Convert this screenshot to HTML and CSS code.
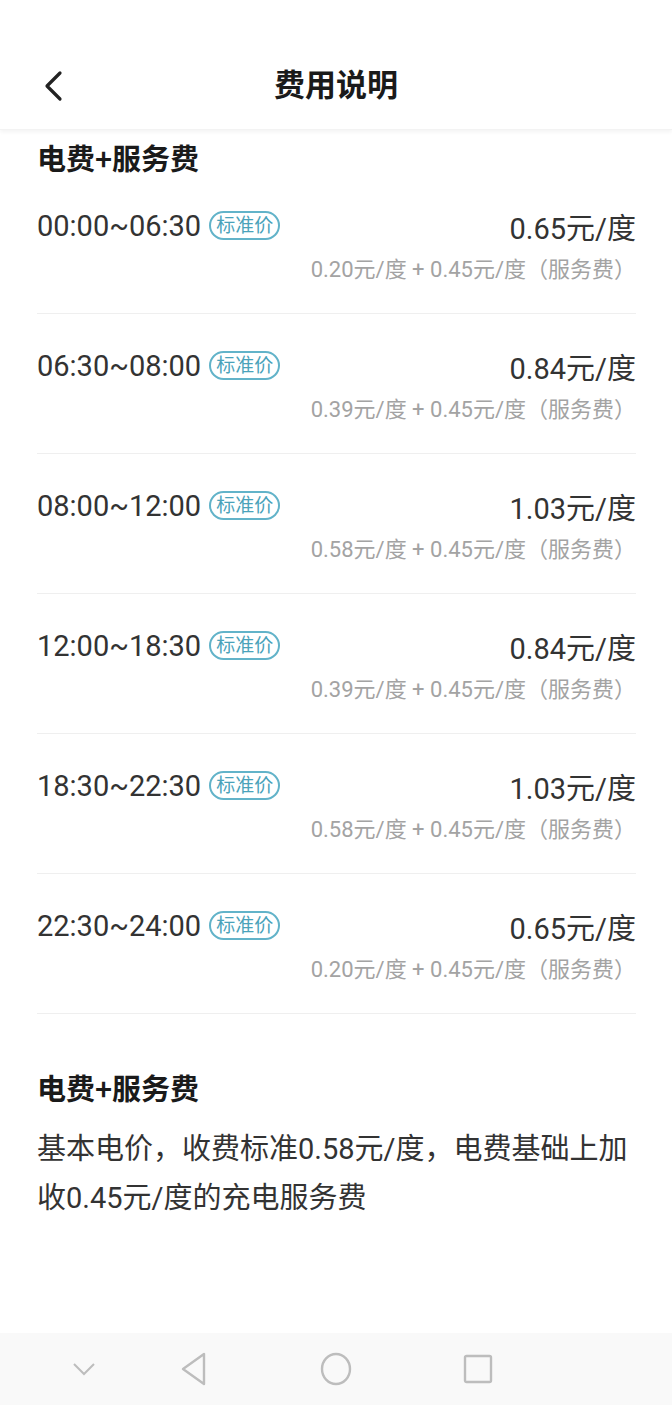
FILE: index.html
```html
<!DOCTYPE html>
<html lang="zh-CN">
<head>
    <meta charset="UTF-8">
    <meta name="viewport" content="width=device-width, initial-scale=1.0">
    <title>费用说明</title>
    <link rel="stylesheet" href="styles.css">
</head>
<body>

    <div class="header">
        <span class="back">
            <svg width="24" height="32" viewBox="0 0 24 32">
                <path d="M18 3 L5 16 L18 29" fill="none" stroke="#222" stroke-width="3.2" stroke-linecap="round" stroke-linejoin="round"/>
            </svg>
        </span>
        <h1>费用说明</h1>
    </div>

    <div class="content">
        <h2 class="section-title">电费+服务费</h2>

        <ul class="price-list">
            <li class="price-row">
                <div class="row-main">
                    <span class="time">00:00~06:30</span>
                    <span class="badge">标准价</span>
                    <span class="price">0.65元/度</span>
                </div>
                <div class="row-sub">0.20元/度 + 0.45元/度（服务费）</div>
            </li>
            <li class="price-row">
                <div class="row-main">
                    <span class="time">06:30~08:00</span>
                    <span class="badge">标准价</span>
                    <span class="price">0.84元/度</span>
                </div>
                <div class="row-sub">0.39元/度 + 0.45元/度（服务费）</div>
            </li>
            <li class="price-row">
                <div class="row-main">
                    <span class="time">08:00~12:00</span>
                    <span class="badge">标准价</span>
                    <span class="price">1.03元/度</span>
                </div>
                <div class="row-sub">0.58元/度 + 0.45元/度（服务费）</div>
            </li>
            <li class="price-row">
                <div class="row-main">
                    <span class="time">12:00~18:30</span>
                    <span class="badge">标准价</span>
                    <span class="price">0.84元/度</span>
                </div>
                <div class="row-sub">0.39元/度 + 0.45元/度（服务费）</div>
            </li>
            <li class="price-row">
                <div class="row-main">
                    <span class="time">18:30~22:30</span>
                    <span class="badge">标准价</span>
                    <span class="price">1.03元/度</span>
                </div>
                <div class="row-sub">0.58元/度 + 0.45元/度（服务费）</div>
            </li>
            <li class="price-row">
                <div class="row-main">
                    <span class="time">22:30~24:00</span>
                    <span class="badge">标准价</span>
                    <span class="price">0.65元/度</span>
                </div>
                <div class="row-sub">0.20元/度 + 0.45元/度（服务费）</div>
            </li>
        </ul>

        <h2 class="section-title note-title">电费+服务费</h2>
        <p class="note">基本电价，收费标准0.58元/度，电费基础上加收0.45元/度的充电服务费</p>
    </div>

    <div class="nav-bar">
        <svg width="26" height="16" viewBox="0 0 26 16">
            <path d="M3 3 L13 13 L23 3" fill="none" stroke="#bdbdbd" stroke-width="2"/>
        </svg>
        <svg width="30" height="34" viewBox="0 0 30 34">
            <path d="M25 2 L25 32 L4 17 Z" fill="none" stroke="#bdbdbd" stroke-width="2.4" stroke-linejoin="round"/>
        </svg>
        <svg width="34" height="36" viewBox="0 0 34 36">
            <ellipse cx="17" cy="18" rx="14" ry="15" fill="none" stroke="#bdbdbd" stroke-width="2.4"/>
        </svg>
        <svg width="30" height="30" viewBox="0 0 30 30">
            <rect x="2" y="2" width="26" height="26" rx="1.5" fill="none" stroke="#bdbdbd" stroke-width="2.4"/>
        </svg>
    </div>

</body>
</html>
```

FILE: styles.css
```css
* {
    box-sizing: border-box;
}
body {
    margin: 0;
    width: 672px;
    height: 1405px;
    background-color: #fff;
    font-family: Roboto, 'Noto Sans CJK SC', sans-serif;
    color: #333;
    position: relative;
    display: flex;
    flex-direction: column;
}
.header {
    height: 130px;
    display: flex;
    align-items: center;
    justify-content: center;
    position: relative;
    padding-top: 36px;
    background-color: #fff;
    box-shadow: 0 2px 4px rgba(0,0,0,0.05);
    border-bottom: 1px solid #f3f3f3;
}
.header h1 {
    margin: 0;
    font-size: 31px;
    font-weight: bold;
    color: #1a1a1a;
    font-family: 'Noto Sans CJK SC', sans-serif;
}
.back {
    position: absolute;
    left: 42px;
    top: 70px;
    line-height: 0;
}
.content {
    padding: 0 36px 0 37px;
    flex-grow: 1;
}
.section-title {
    margin: 10px 0 0;
    height: 34px;
    line-height: 34px;
    font-size: 29px;
    font-weight: bold;
    color: #1a1a1a;
    font-family: 'Noto Sans CJK SC', sans-serif;
}
.price-list {
    list-style: none;
    margin: 0;
    padding: 0;
}
.price-row {
    padding: 32px 0 28px;
    border-bottom: 1px solid #efefef;
}
.row-main {
    display: flex;
    align-items: center;
    height: 40px;
}
.time {
    font-size: 29px;
    color: #333;
}
.badge {
    margin-left: 8px;
    height: 29px;
    padding: 0 5px;
    border: 2px solid #62b3c9;
    border-radius: 15px;
    font-size: 19px;
    line-height: 25px;
    color: #4aa2ba;
    margin-top: -2px;
}
.price {
    margin-left: auto;
    font-size: 29px;
    color: #333;
}
.row-sub {
    margin-top: 9px;
    height: 30px;
    line-height: 30px;
    text-align: right;
    font-size: 22px;
    color: #a3a3a3;
}
.note-title {
    margin-top: 56px;
}
.note {
    margin: 21px 0 0;
    font-size: 29px;
    line-height: 49px;
    color: #333;
}
.nav-bar {
    height: 72px;
    background-color: #f9f9f9;
    display: flex;
    align-items: center;
    padding-left: 71px;
}
.nav-bar svg:nth-child(2) {
    margin-left: 82px;
}
.nav-bar svg:nth-child(3) {
    margin-left: 110px;
}
.nav-bar svg:nth-child(4) {
    margin-left: 110px;
}
```
